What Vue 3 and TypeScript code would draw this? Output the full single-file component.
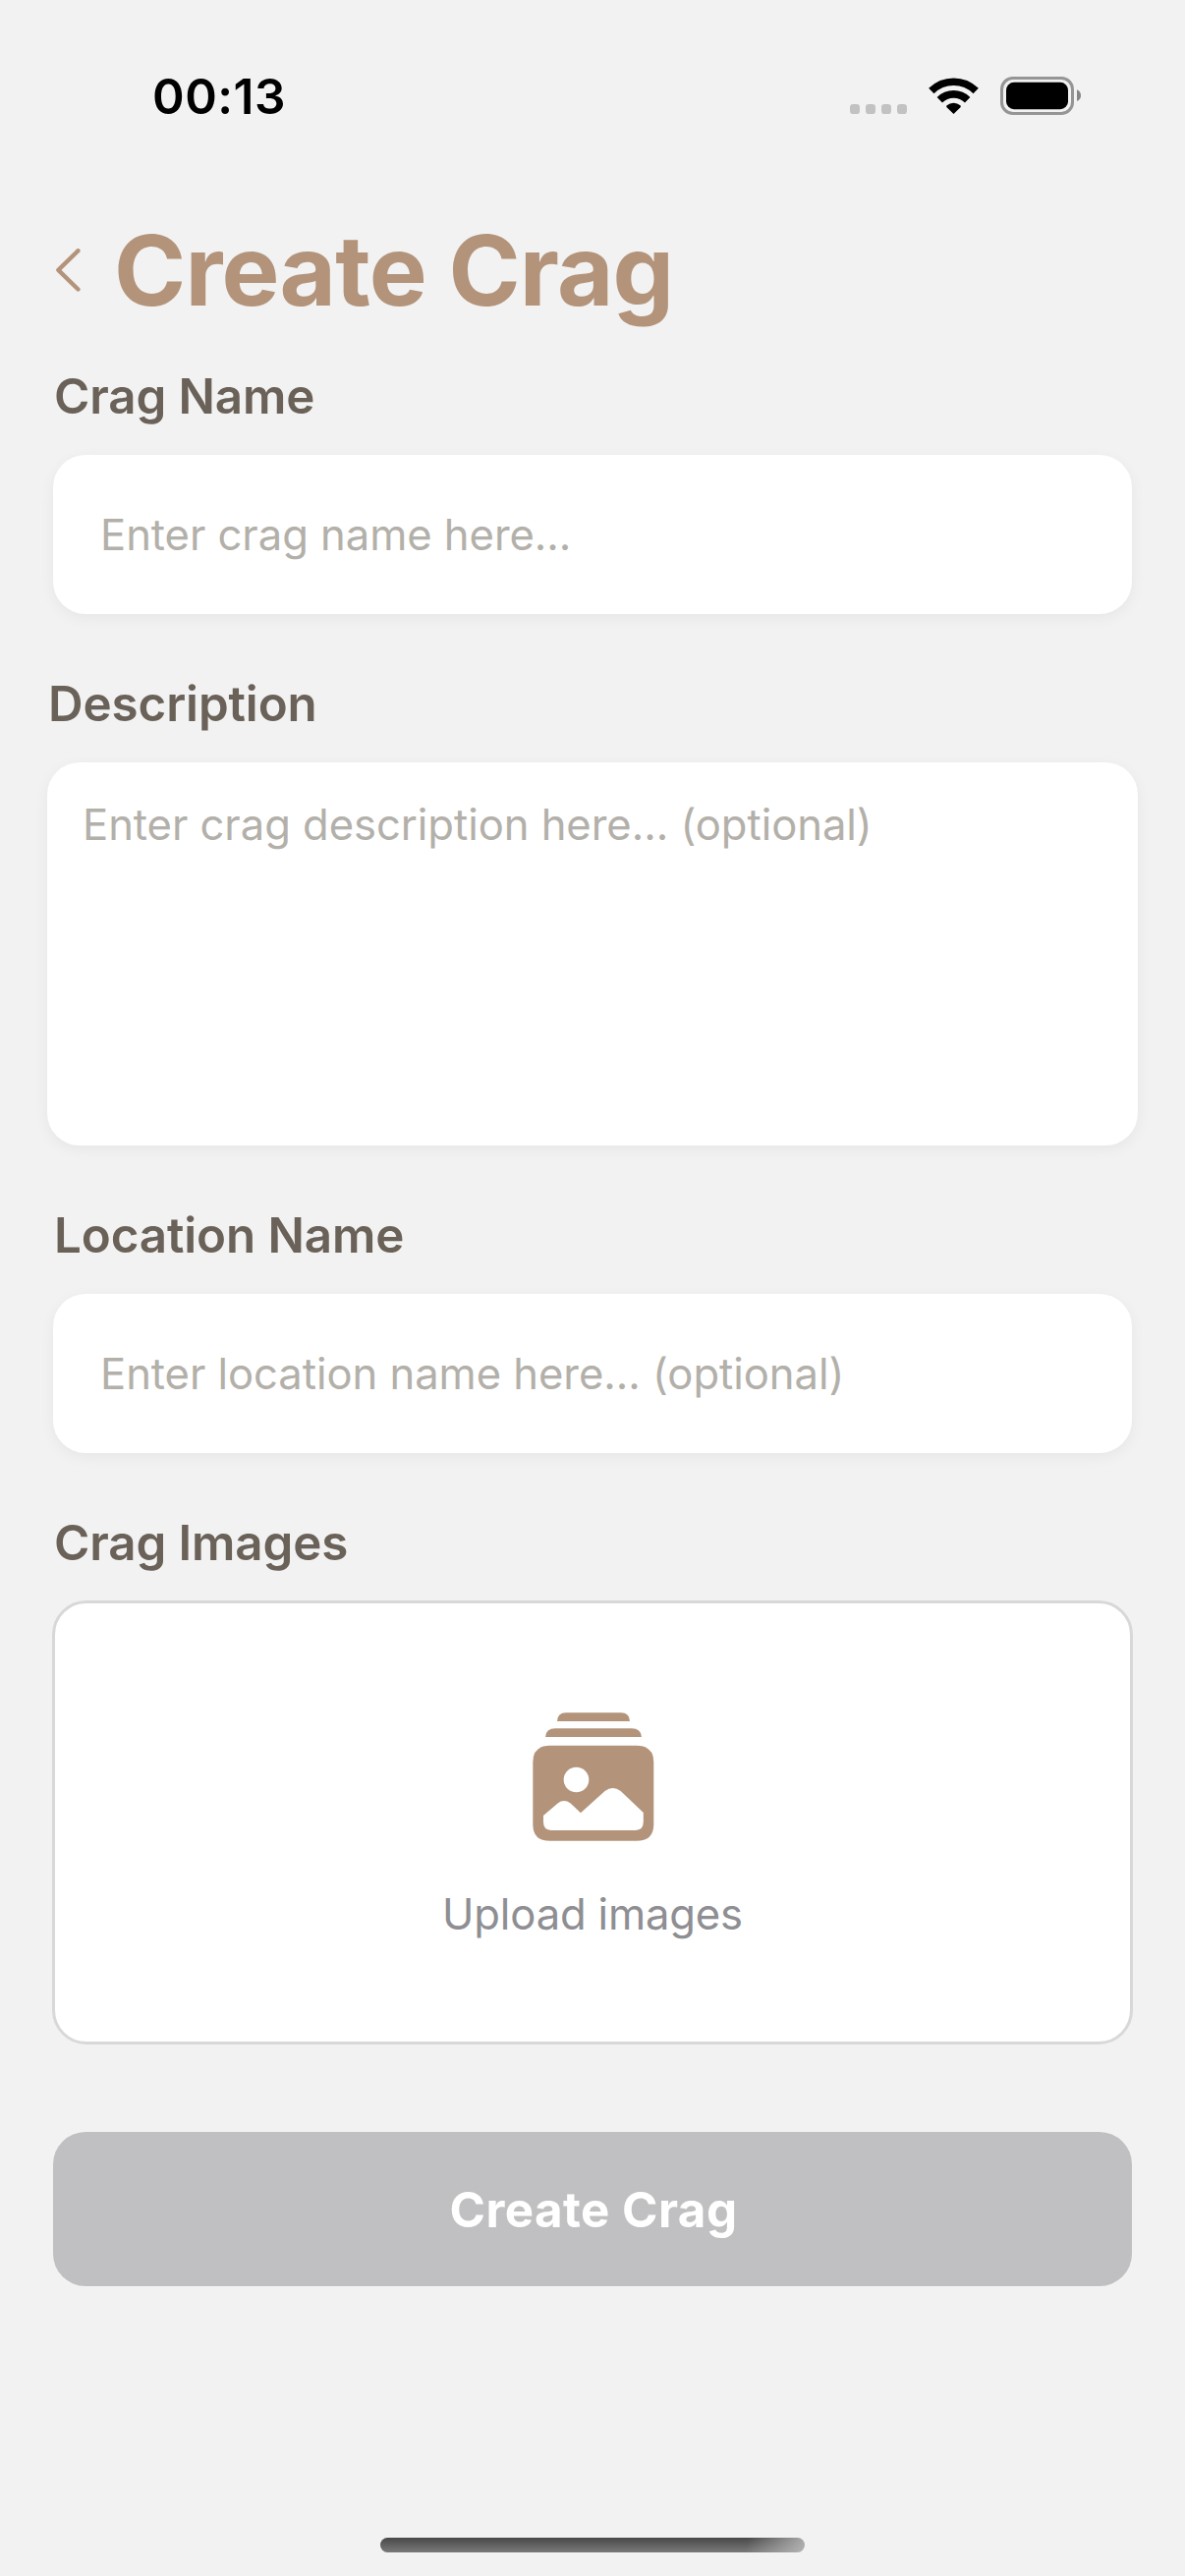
<script setup lang="ts">
interface Field {
  label: string
  placeholder: string
  multiline: boolean
}

const fields: Field[] = [
  { label: 'Crag Name', placeholder: 'Enter crag name here...', multiline: false },
  { label: 'Description', placeholder: 'Enter crag description here... (optional)', multiline: true },
  { label: 'Location Name', placeholder: 'Enter location name here... (optional)', multiline: false },
]
</script>

<template>
  <div class="screen">
    <div class="status-bar">
      <span class="time">00:13</span>
      <svg class="status-icons" viewBox="75 54 705 120" aria-hidden="true">
        <g fill="#c2c2c2">
          <rect x="75" y="138" width="30" height="30" rx="10" />
          <rect x="123" y="138" width="30" height="30" rx="10" />
          <rect x="171" y="138" width="30" height="30" rx="10" />
          <rect x="219" y="138" width="30" height="30" rx="10" />
        </g>
        <g fill="none" stroke="#000" stroke-width="23">
          <path d="M323.500 97.500A97 97 0 0 1 459.500 97.500" />
          <path d="M349 125A60.500 60.500 0 0 1 434 125" />
        </g>
        <path d="M391.500 168L370.500 147.500Q368 144.500 371 142Q380 134 391.500 134T412 142Q415 144.500 412.500 147.500Z" fill="#000" />
        <rect x="538.500" y="58.500" width="216" height="108" rx="34" fill="none" stroke="#959595" stroke-width="9" />
        <rect x="552" y="71.500" width="189" height="82" rx="24" fill="#000" />
        <path d="M768 94Q780 99 780 111.500T768 129Z" fill="#868686" />
      </svg>
    </div>

    <header class="header">
      <svg class="back" viewBox="81 131 75 131" aria-hidden="true">
        <path d="M148.500 137.500L88 196.500L148.500 255.500" />
      </svg>
      <h1 class="title">Create Crag</h1>
    </header>

    <main class="form">
      <section v-for="field in fields" :key="field.label" class="field" :class="{ wide: field.multiline }">
        <h2 class="label">{{ field.label }}</h2>
        <div class="input" :class="{ area: field.multiline }">{{ field.placeholder }}</div>
      </section>

      <section class="field">
        <h2 class="label">Crag Images</h2>
        <div class="upload">
          <svg class="upload-icon" viewBox="336 69 370 393" aria-hidden="true">
            <g fill="#b3947b">
              <path d="M411 96Q412 70 438 70H606Q632 70 633 96Z" />
              <path d="M375 144Q377 118 405 118H639Q667 118 669 144Z" />
              <path d="M389 170.500H653Q706 170.500 706 221V411Q706 461.500 653 461.500H389Q337 461.500 337 411V221Q337 170.500 389 170.500Z" />
            </g>
            <g fill="#fff">
              <circle cx="469.500" cy="274.500" r="38.500" />
              <path d="M369 384L413 346.500Q432 332 452 346.500L483 375.500L557 309Q581 291 605 309L674.500 375V403Q674.500 429 650 429H393Q369 429 369 403Z" />
            </g>
          </svg>
          <span class="upload-text">Upload images</span>
        </div>
      </section>

      <button class="submit" type="button">Create Crag</button>
    </main>

    <div class="home-indicator"></div>
  </div>
</template>

<style>
body {
  background: #f2f2f2;
}
</style>

<style scoped>
.screen {
  box-sizing: border-box;
  display: flex;
  flex-direction: column;
  width: 1206px;
  height: 2622px;
  padding-bottom: 24px;
  background: #f2f2f2;
  font-family: Inter, "Liberation Sans", sans-serif;
}

.status-bar {
  display: flex;
  align-items: center;
  justify-content: space-between;
  height: 196px;
  padding: 0 106px 0 155px;
}

.time {
  color: #000;
  font-size: 49.5px;
  font-weight: 600;
  letter-spacing: 0.5px;
  line-height: 60px;
}

.status-icons {
  width: 235px;
  height: 40px;
}

.header {
  display: flex;
  align-items: center;
  gap: 34px;
  margin-top: 19px;
  padding-left: 57px;
}

.back {
  width: 25px;
  height: 43.67px;
  fill: none;
  stroke: #b3947b;
  stroke-width: 13;
  stroke-linecap: round;
  stroke-linejoin: round;
}

.title {
  margin: 0;
  color: #b3947b;
  font-size: 99px;
  font-weight: 700;
  letter-spacing: -0.84px;
  line-height: 120px;
}

.form {
  display: flex;
  flex-direction: column;
  gap: 61px;
  padding: 38px 54px 0;
}

.field {
  display: flex;
  flex-direction: column;
  gap: 30px;
}

.wide {
  margin: 0 -6px;
}

.label {
  margin: 0;
  padding-left: 1px;
  color: #6a6259;
  font-size: 49.3px;
  font-weight: 600;
  letter-spacing: -0.1px;
  line-height: 60px;
}

.input {
  box-sizing: border-box;
  height: 162px;
  padding: 55px 48px 53px;
  border-radius: 33px;
  background: #fff;
  box-shadow: 0 4px 15px rgba(0, 0, 0, 0.05);
  color: #b3b0aa;
  font-size: 43.6px;
  letter-spacing: -0.06px;
  line-height: 54px;
}

.area {
  height: 390px;
  padding: 37px 36px;
}

.upload {
  box-sizing: border-box;
  display: flex;
  flex-direction: column;
  align-items: center;
  gap: 48px;
  height: 452px;
  margin: -1px;
  padding-top: 111px;
  border: 3px solid #d8d8d8;
  border-radius: 35px;
  background: #fff;
}

.upload-icon {
  width: 123.3px;
  height: 131px;
  margin-left: 2px;
}

.upload-text {
  color: #8e8e93;
  font-size: 43.6px;
  letter-spacing: -0.17px;
  line-height: 54px;
}

.submit {
  height: 157px;
  margin-top: 29px;
  padding: 0 0 0 2px;
  border: 0;
  border-radius: 33px;
  background: #c0c0c2;
  color: #fff;
  font-family: inherit;
  font-size: 49.3px;
  font-weight: 700;
  letter-spacing: 0.45px;
  line-height: 60px;
}

.home-indicator {
  align-self: center;
  width: 432px;
  height: 15px;
  margin-top: auto;
  border-radius: 8px;
  background:
    linear-gradient(100deg, rgba(190, 190, 190, 0) 86%, rgba(190, 190, 190, 0.85) 100%),
    linear-gradient(#484848, #7a7a7a);
}
</style>
